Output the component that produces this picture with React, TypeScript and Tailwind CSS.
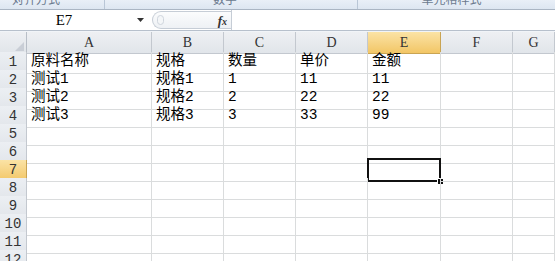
import React from "react";

const cols = ["A", "B", "C", "D", "E", "F", "G"];
const data: string[][] = [
  ["原料名称", "规格", "数量", "单价", "金额", "", ""],
  ["测试1", "规格1", "1", "11", "11", "", ""],
  ["测试2", "规格2", "2", "22", "22", "", ""],
  ["测试3", "规格3", "3", "33", "99", "", ""],
];

const gridCols = "grid grid-cols-[27px_125px_72px_72px_72px_73px_72px_1fr]";

export default function App() {
  const rows = Array.from({ length: 12 }, (_, i) => i + 1);
  return (
    <div lang="zh-CN" className="w-[555px] h-[261px] overflow-hidden bg-white flex flex-col" style={{ fontFamily: '"Liberation Sans", "Noto Sans CJK SC", sans-serif' }}>
      {/* ribbon bottom strip */}
      <div className="h-[9px] shrink-0 flex bg-gradient-to-b from-[#e9eff7] to-[#dde6f1] overflow-hidden">
        <div className="w-[105px] border-r border-[#b9c6d6] overflow-hidden flex justify-center">
          <span className="text-[12px] leading-[12px] -mt-[7px] text-[#6b7a8e] pr-[32px]" style={{ fontFamily: '"Noto Sans CJK SC", sans-serif' }}>对齐方式</span>
        </div>
        <div className="w-[253px] border-r border-[#b9c6d6] overflow-hidden flex justify-center">
          <span className="text-[12px] leading-[12px] -mt-[7px] text-[#6b7a8e] pr-[12px]" style={{ fontFamily: '"Noto Sans CJK SC", sans-serif' }}>数字</span>
        </div>
        <div className="flex-1 overflow-hidden flex justify-center">
          <span className="text-[12px] leading-[12px] -mt-[7px] text-[#6b7a8e] pr-[10px]" style={{ fontFamily: '"Noto Sans CJK SC", sans-serif' }}>单元格样式</span>
        </div>
      </div>
      <div className="h-[1px] shrink-0 bg-[#aab5c3]" />
      {/* formula bar */}
      <div className="h-[20px] shrink-0 flex items-stretch bg-white">
        <div className="w-[152px] flex items-center">
          <div className="w-[128px] text-center text-[15px] text-black" style={{ fontFamily: '"Liberation Serif", serif' }}>E7</div>
          <div className="w-[24px] flex justify-center">
            <svg width="7" height="4" viewBox="0 0 7 4"><path d="M0 0h7L3.5 4z" fill="#333" /></svg>
          </div>
        </div>
        <div className="w-[79px] flex items-center py-[1px]">
          <div className="h-[18px] w-full rounded-l-full border border-r-0 border-[#c6cdd6] bg-gradient-to-b from-[#fbfcfd] to-[#eef1f5] flex items-center pl-[4px] pr-[4px]">
            <div className="w-[7px] h-[10px] rounded-full border border-[#cfd5dd] bg-[#f4f6f8]" />
            <div className="flex-1" />
            <span className="text-[13px] italic font-bold text-[#333] leading-none" style={{ fontFamily: '"Liberation Serif", serif' }}>f<span className="text-[10px]">x</span></span>
          </div>
        </div>
        <div className="flex-1 border-l border-[#c6cdd6] bg-white" />
      </div>
      <div className="h-[1px] shrink-0 bg-[#b7c0cc]" />
      <div className="h-[1px] shrink-0 bg-[#f1f4f8]" />
      {/* column headers */}
      <div className={`${gridCols} h-[20px] shrink-0`}>
        <div className="bg-gradient-to-b from-[#eef0f3] to-[#e1e5ea] border-r border-b border-[#b8bec7] flex items-end justify-end pr-[2px] pb-[2px]">
          <svg width="9" height="9" viewBox="0 0 9 9"><path d="M9 0V9H0z" fill="#c9ced6" /></svg>
        </div>
        {cols.map((c) => (
          <div
            key={c}
            className={
              c === "E"
                ? "bg-gradient-to-b from-[#fbe3a5] to-[#f2c665] border-r border-b border-[#c9a453] flex items-center justify-center text-[14px] text-[#333]"
                : "bg-gradient-to-b from-[#eef0f3] to-[#e1e5ea] border-r border-b border-[#c3c8cf] flex items-center justify-center text-[14px] text-[#333]"
            }
            style={{ fontFamily: '"Liberation Serif", serif' }}
          >
            {c}
          </div>
        ))}
      </div>
      {/* rows */}
      {rows.map((r) => (
        <div key={r} className={`${gridCols} h-[18px] shrink-0`}>
          <div
            className={
              r === 7
                ? "bg-gradient-to-b from-[#fbe3a5] to-[#f2c665] border-r border-b border-[#c9a453] flex items-center justify-center text-[14px] text-[#333]"
                : "bg-gradient-to-b from-[#eceff3] to-[#e2e6eb] border-r border-b border-[#c3c8cf] flex items-center justify-center text-[14px] text-[#333]"
            }
            style={{ fontFamily: '"Liberation Mono", monospace' }}
          >
            {r}
          </div>
          {cols.map((c, ci) => {
            const v = data[r - 1]?.[ci] ?? "";
            const sel = r === 7 && c === "E";
            return (
              <div
                key={c}
                className="relative border-r border-b border-[#dadcdd] pl-[4px] text-[14.5px] leading-[18px] text-black whitespace-nowrap"
                style={{ fontFamily: '"Liberation Mono", "Noto Sans CJK SC", monospace' }}
              >
                {v}
                {sel && (
                  <div className="absolute -top-[2px] -left-[1px] -right-[1px] -bottom-[1px] border-[2.5px] border-[#111]">
                    <div className="absolute -right-[5px] -bottom-[5px] w-[7px] h-[7px] bg-[#111] border border-white" />
                  </div>
                )}
              </div>
            );
          })}
        </div>
      ))}
    </div>
  );
}
